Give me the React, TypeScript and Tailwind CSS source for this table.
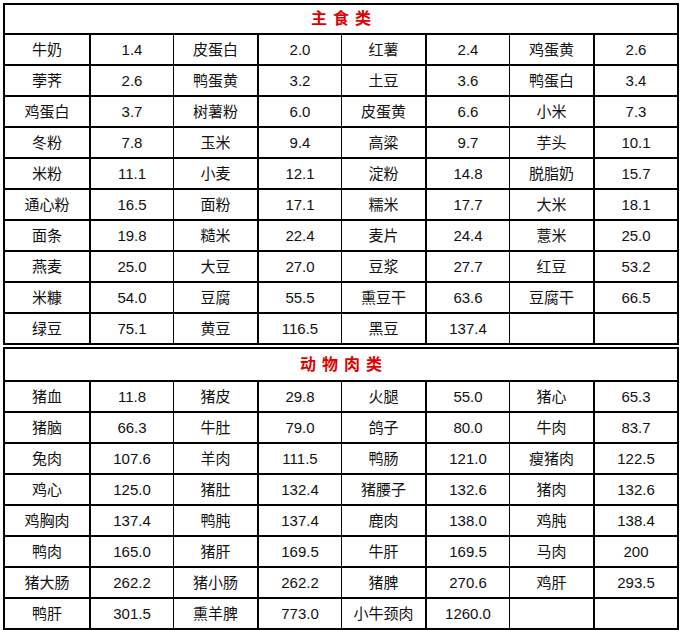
import React from "react";

type Row = [string, string, string, string, string, string, string, string];

const grains: Row[] = [
  ["牛奶", "1.4", "皮蛋白", "2.0", "红薯", "2.4", "鸡蛋黄", "2.6"],
  ["荸荠", "2.6", "鸭蛋黄", "3.2", "土豆", "3.6", "鸭蛋白", "3.4"],
  ["鸡蛋白", "3.7", "树薯粉", "6.0", "皮蛋黄", "6.6", "小米", "7.3"],
  ["冬粉", "7.8", "玉米", "9.4", "高粱", "9.7", "芋头", "10.1"],
  ["米粉", "11.1", "小麦", "12.1", "淀粉", "14.8", "脱脂奶", "15.7"],
  ["通心粉", "16.5", "面粉", "17.1", "糯米", "17.7", "大米", "18.1"],
  ["面条", "19.8", "糙米", "22.4", "麦片", "24.4", "薏米", "25.0"],
  ["燕麦", "25.0", "大豆", "27.0", "豆浆", "27.7", "红豆", "53.2"],
  ["米糠", "54.0", "豆腐", "55.5", "熏豆干", "63.6", "豆腐干", "66.5"],
  ["绿豆", "75.1", "黄豆", "116.5", "黑豆", "137.4", "", ""],
];

const meats: Row[] = [
  ["猪血", "11.8", "猪皮", "29.8", "火腿", "55.0", "猪心", "65.3"],
  ["猪脑", "66.3", "牛肚", "79.0", "鸽子", "80.0", "牛肉", "83.7"],
  ["兔肉", "107.6", "羊肉", "111.5", "鸭肠", "121.0", "瘦猪肉", "122.5"],
  ["鸡心", "125.0", "猪肚", "132.4", "猪腰子", "132.6", "猪肉", "132.6"],
  ["鸡胸肉", "137.4", "鸭肫", "137.4", "鹿肉", "138.0", "鸡肫", "138.4"],
  ["鸭肉", "165.0", "猪肝", "169.5", "牛肝", "169.5", "马肉", "200"],
  ["猪大肠", "262.2", "猪小肠", "262.2", "猪脾", "270.6", "鸡肝", "293.5"],
  ["鸭肝", "301.5", "熏羊脾", "773.0", "小牛颈肉", "1260.0", "", ""],
];

const FoodTable = ({ title, rows, headH }: { title: string; rows: Row[]; headH: string }) => (
  <div className="border-2 border-black bg-white">
    <div className={`flex items-center justify-center ${headH}`}>
      <span className="text-[16px] font-bold text-[#e00000] tracking-[6px] pl-[6px] leading-none">
        {title}
      </span>
    </div>
    {rows.map((row, i) => (
      <div key={i} className="grid grid-cols-8 border-t-2 border-black h-[31px]">
        {row.map((cell, j) => (
          <div
            key={j}
            className={`flex items-center justify-center text-[15px] text-[#111] leading-none ${
              j > 0 ? (j % 2 === 1 ? "border-l-2 border-black" : "border-l border-black") : ""
            }`}
          >
            {cell}
          </div>
        ))}
      </div>
    ))}
  </div>
);

export default function App() {
  return (
    <div
      className="w-[681px] h-[630px] bg-white pt-[3px] pl-[3px] pr-[2px] flex flex-col gap-[2px]"
      style={{ fontFamily: '"Liberation Sans", "Noto Sans CJK SC", sans-serif' }}
    >
      <FoodTable title="主食类" rows={grains} headH="h-[28px]" />
      <FoodTable title="动物肉类" rows={meats} headH="h-[31px]" />
    </div>
  );
}
